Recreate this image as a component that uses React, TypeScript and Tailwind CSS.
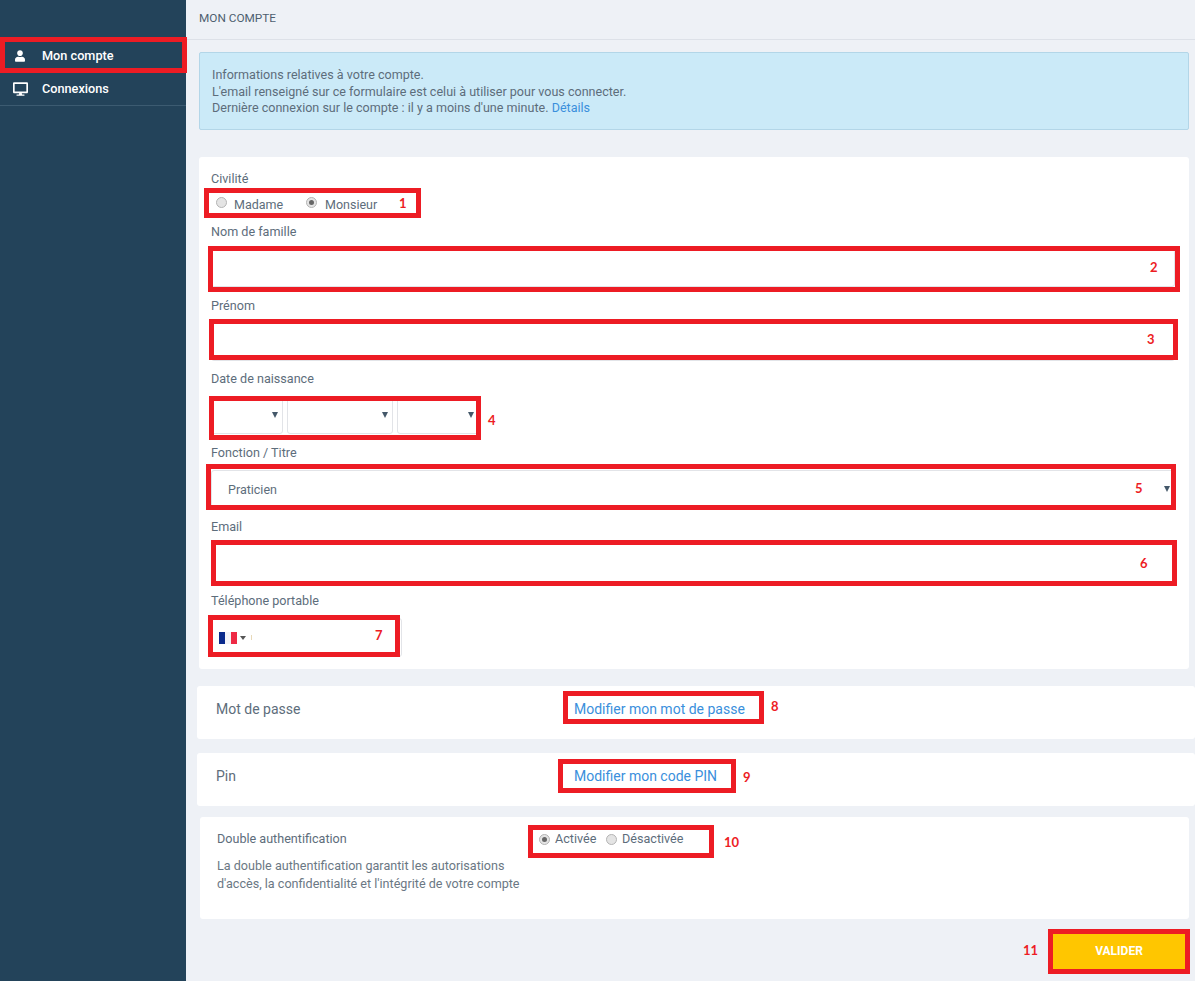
import { FaDesktop, FaUser } from 'react-icons/fa';

const Label = ({ children }: { children: string }) => (
  <div className="h-[20px] leading-[20px] text-[12.6px] text-[#5d6d7b]">{children}</div>
);

const Radio = ({ checked }: { checked?: boolean }) => (
  <span className="flex items-center justify-center w-[11px] h-[11px] rounded-full bg-[#e4e4e4] border border-[#b4b4b4]">
    {checked && <span className="w-[5px] h-[5px] rounded-full bg-[#666]" />}
  </span>
);

const Arrow = () => (
  <span className="w-0 h-0 border-x-[3px] border-x-transparent border-t-[6px] border-t-[#44586a]" />
);

const TextField = ({ last }: { last?: boolean }) => (
  <div className={`h-[38px] mt-[7px] ${last ? 'mb-[8px]' : 'mb-[9px]'} border border-[#e2e4e8] rounded-[3px] bg-white`} />
);

const DateSelect = ({ width, right }: { width: string; right: string }) => (
  <div className={`${width} ${right} h-[38px] flex items-center justify-end border border-[#e2e4e8] rounded-[3px] bg-white`}>
    <Arrow />
  </div>
);

const Row = ({ label, link }: { label: string; link: string }) => (
  <div className="h-[53px] ml-[-2px] mr-[-6px] pl-[19px] pt-[14px] flex items-start bg-white rounded-[3px] text-[14px] leading-[18px]">
    <div className="w-[358px] text-[#5d6d7b]">{label}</div>
    <a className="text-[#3a8fdc]">{link}</a>
  </div>
);

export default function App() {
  return (
    <div className="relative flex w-[1195px] h-[981px] overflow-hidden bg-[#eef1f6] font-['Roboto',sans-serif]">
      <aside className="w-[186px] shrink-0 bg-[#23435a] pt-[39px] text-white text-[12.7px] font-medium">
        <div className="h-[33px] flex items-center pl-[15px]">
          <FaUser className="w-[10px] h-[12px]" />
          <span className="ml-[17px]">Mon compte</span>
        </div>
        <div className="h-[34px] flex items-center pl-[13px] border-b border-[#3c5b71]">
          <FaDesktop className="w-[15px] h-[14px]" />
          <span className="ml-[14px]">Connexions</span>
        </div>
      </aside>

      <main className="flex-1 min-w-0">
        <header className="h-[40px] pl-[13px] border-b border-[#dde1e8] flex items-center pb-[2px] text-[11.8px] text-[#4d5f6f] uppercase">
          Mon compte
        </header>

        <div className="ml-[13px] mr-[6px]">
          <div className="mt-[12px] h-[78px] pl-[12px] pt-[14px] bg-[#cbeaf8] border border-[#b3d6e8] rounded-[2px] text-[12.55px] leading-[16.5px] text-[#5d6d7b]">
            <p>Informations relatives à votre compte.</p>
            <p>L'email renseigné sur ce formulaire est celui à utiliser pour vous connecter.</p>
            <p>
              Dernière connexion sur le compte : il y a moins d'une minute.{' '}
              <a className="text-[#3a8fdc]">Détails</a>
            </p>
          </div>

          <section className="mt-[27px] h-[512px] pl-[12px] pr-[14px] pt-[12px] bg-white rounded-[3px]">
            <Label>Civilité</Label>
            <div className="h-[33px] flex items-start pt-[7px] pl-[5px] text-[12.5px] leading-[16px] text-[#5d6d7b]">
              <span className="mt-[1px]"><Radio /></span>
              <span className="ml-[7px] w-[72px] mt-[1px]">Madame</span>
              <span className="mt-[1px]"><Radio checked /></span>
              <span className="ml-[8px] mt-[1px]">Monsieur</span>
            </div>

            <Label>Nom de famille</Label>
            <TextField />
            <Label>Prénom</Label>
            <TextField last />

            <Label>Date de naissance</Label>
            <div className="flex gap-[4px] mt-[7px] mb-[9px]">
              <DateSelect width="w-[72px]" right="pr-[4px]" />
              <DateSelect width="w-[106px]" right="pr-[4px]" />
              <DateSelect width="w-[83px]" right="pr-[5px]" />
            </div>

            <Label>Fonction / Titre</Label>
            <div className="h-[38px] mt-[7px] mb-[9px] pl-[16px] pr-[4px] flex items-center justify-between border border-[#e2e4e8] rounded-[3px] text-[12.5px] text-[#5d6d7b]">
              <span className="mt-[2px]">Praticien</span>
              <Arrow />
            </div>

            <Label>Email</Label>
            <TextField />

            <Label>Téléphone portable</Label>
            <div className="w-[191px] h-[39px] mt-[7px] pl-[7px] flex items-center border border-[#e2e4e8] rounded-[3px]">
              <svg width="18" height="12" viewBox="0 0 18 12" className="mt-[1px]">
                <rect width="6" height="12" fill="#0a2a8c" />
                <rect x="6" width="6" height="12" fill="#f4f4f8" />
                <rect x="12" width="6" height="12" fill="#ee2a45" />
              </svg>
              <span className="ml-[3px] mt-[1px] w-0 h-0 border-x-[3px] border-x-transparent border-t-[4px] border-t-[#555]" />
              <span className="ml-[5px] w-[1px] h-[5px] bg-[#e8d9b8]" />
            </div>
          </section>

          <div className="mt-[17px]">
            <Row label="Mot de passe" link="Modifier mon mot de passe" />
          </div>
          <div className="mt-[14px]">
            <Row label="Pin" link="Modifier mon code PIN" />
          </div>

          <section className="mt-[11px] ml-[1px] h-[102px] pl-[17px] pt-[14px] flex items-start bg-white rounded-[3px] text-[12.6px] text-[#5d6d7b]">
            <div className="w-[322px]">
              <div className="h-[16px] leading-[16px]">Double authentification</div>
              <p className="mt-[10px] leading-[17.5px] text-[#6b7884]">
                La double authentification garantit les autorisations
                <br />
                d'accès, la confidentialité et l'intégrité de votre compte
              </p>
            </div>
            <div className="flex items-center h-[16px] leading-[16px]">
              <Radio checked />
              <span className="ml-[5px] w-[51px]">Activée</span>
              <Radio />
              <span className="ml-[5px]">Désactivée</span>
            </div>
          </section>

          <div className="mt-[15px] flex justify-end mr-[4px]">
            <button className="w-[132px] h-[35px] pb-[2px] bg-[#ffc600] text-white text-[12px] font-bold">VALIDER</button>
          </div>
        </div>
      </main>

      {/* annotations posees par dessus la capture */}
      <div className="absolute left-0 top-[37px] w-[187px] h-[36px] border-[5px] border-[#ed1c24]" />
      <div className="absolute left-[204px] top-[188px] w-[217px] h-[30px] border-[5px] border-[#ed1c24]" />
      <div className="absolute left-[208px] top-[246px] w-[972px] h-[46px] border-[5px] border-[#ed1c24]" />
      <div className="absolute left-[209px] top-[319px] w-[969px] h-[41px] border-[5px] border-[#ed1c24]" />
      <div className="absolute left-[209px] top-[396px] w-[272px] h-[44px] border-[5px] border-[#ed1c24]" />
      <div className="absolute left-[206px] top-[464px] w-[970px] h-[46px] border-[5px] border-[#ed1c24]" />
      <div className="absolute left-[211px] top-[540px] w-[966px] h-[46px] border-[5px] border-[#ed1c24]" />
      <div className="absolute left-[208px] top-[615px] w-[192px] h-[42px] border-[5px] border-[#ed1c24]" />
      <div className="absolute left-[563px] top-[691px] w-[201px] h-[33px] border-[5px] border-[#ed1c24]" />
      <div className="absolute left-[558px] top-[759px] w-[178px] h-[34px] border-[5px] border-[#ed1c24]" />
      <div className="absolute left-[528px] top-[825px] w-[186px] h-[33px] border-[5px] border-[#ed1c24]" />
      <div className="absolute left-[1048px] top-[929px] w-[142px] h-[45px] border-[5px] border-[#ed1c24]" />

      <span className="absolute left-[399px] top-[195px] text-[13px] leading-[16px] font-bold text-[#ed1c24] font-['Lato',sans-serif]">1</span>
      <span className="absolute left-[1150px] top-[259px] text-[13px] leading-[16px] font-bold text-[#ed1c24] font-['Lato',sans-serif]">2</span>
      <span className="absolute left-[1147px] top-[331px] text-[13px] leading-[16px] font-bold text-[#ed1c24] font-['Lato',sans-serif]">3</span>
      <span className="absolute left-[488px] top-[412px] text-[13px] leading-[16px] font-bold text-[#ed1c24] font-['Lato',sans-serif]">4</span>
      <span className="absolute left-[1135px] top-[480px] text-[13px] leading-[16px] font-bold text-[#ed1c24] font-['Lato',sans-serif]">5</span>
      <span className="absolute left-[1140px] top-[555px] text-[13px] leading-[16px] font-bold text-[#ed1c24] font-['Lato',sans-serif]">6</span>
      <span className="absolute left-[375px] top-[627px] text-[13px] leading-[16px] font-bold text-[#ed1c24] font-['Lato',sans-serif]">7</span>
      <span className="absolute left-[771px] top-[698px] text-[13px] leading-[16px] font-bold text-[#ed1c24] font-['Lato',sans-serif]">8</span>
      <span className="absolute left-[743px] top-[769px] text-[13px] leading-[16px] font-bold text-[#ed1c24] font-['Lato',sans-serif]">9</span>
      <span className="absolute left-[724px] top-[834px] text-[13px] leading-[16px] font-bold text-[#ed1c24] font-['Lato',sans-serif]">10</span>
      <span className="absolute left-[1023px] top-[942px] text-[13px] leading-[16px] font-bold text-[#ed1c24] font-['Lato',sans-serif]">11</span>
    </div>
  );
}
